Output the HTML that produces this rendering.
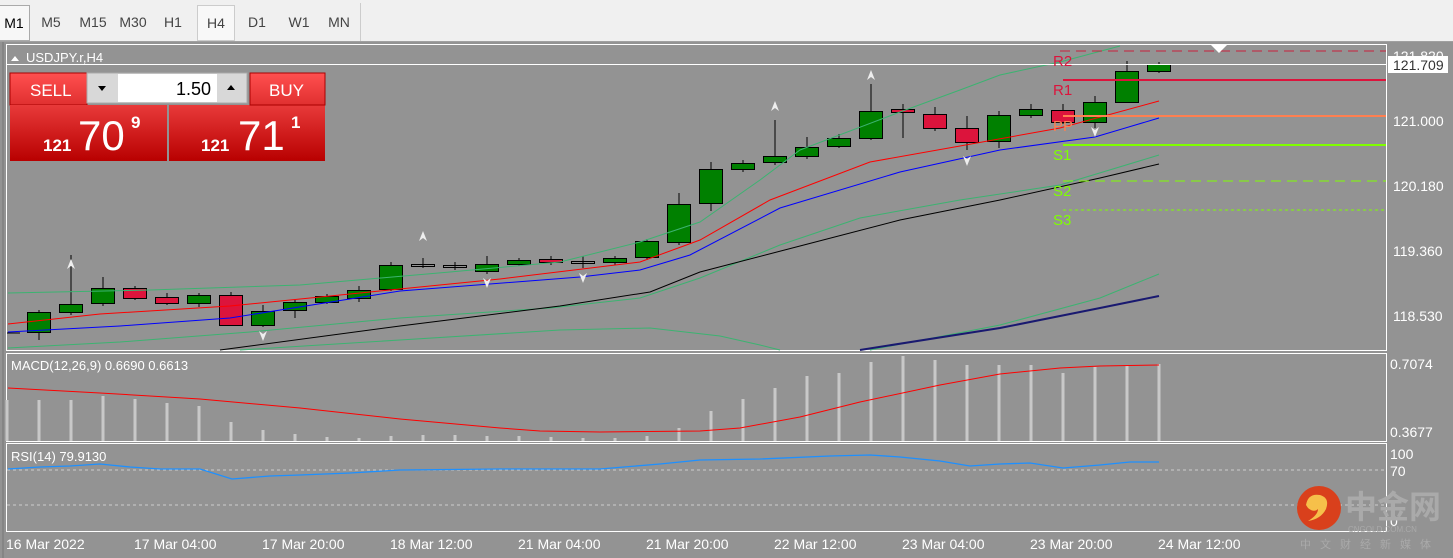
<!DOCTYPE html>
<html><head><meta charset="utf-8"><style>
html,body{margin:0;padding:0;width:1453px;height:558px;overflow:hidden;background:#939393;font-family:"Liberation Sans",sans-serif}
#tb{position:absolute;left:0;top:0;width:1453px;height:41px;background:#f0f0f0;border-bottom:1px solid #a0a0a0}
.b{position:absolute;top:5px;height:34px;line-height:34px;font-size:14px;color:#444;text-align:center}
svg{position:absolute;left:0;top:0}
</style></head><body>
<div id="tb">
<div class="b" style="left:-2px;width:30px;border:1px solid #aaa;background:#f7f7f7;color:#000">M1</div>
<div class="b" style="left:36px;width:30px">M5</div>
<div class="b" style="left:76px;width:34px">M15</div>
<div class="b" style="left:116px;width:34px">M30</div>
<div class="b" style="left:160px;width:26px">H1</div>
<div class="b" style="left:197px;width:36px;border:1px solid #ccc;background:#f8f8f8">H4</div>
<div class="b" style="left:242px;width:30px">D1</div>
<div class="b" style="left:284px;width:30px">W1</div>
<div class="b" style="left:324px;width:30px">MN</div>
<div style="position:absolute;left:360px;top:3px;width:1px;height:38px;background:#ccc"></div>
</div>
<svg id="s" width="1453" height="558" xmlns="http://www.w3.org/2000/svg" font-family="Liberation Sans, sans-serif">
<rect x="0" y="42" width="1453" height="516" fill="#939393"/>
<line x1="3" y1="42" x2="3" y2="558" stroke="#777"/>
<rect x="6.5" y="44.5" width="1380" height="306" fill="none" stroke="#fff"/>
<rect x="6.5" y="353.5" width="1380" height="88" fill="none" stroke="#fff"/>
<rect x="6.5" y="443.5" width="1380" height="88" fill="none" stroke="#fff"/>
<g id="dyn"></g>
<line x1="1060" y1="51" x2="1386" y2="51" stroke="#c8203c" stroke-dasharray="10,6"/>
<line x1="7" y1="64.5" x2="1386" y2="64.5" stroke="#fff"/>
<line x1="1063" y1="80" x2="1386" y2="80" stroke="#dc143c" stroke-width="2"/>
<line x1="1063" y1="116" x2="1386" y2="116" stroke="#ff7f50" stroke-width="2"/>
<line x1="1063" y1="145" x2="1386" y2="145" stroke="#7fff00" stroke-width="2"/>
<line x1="1063" y1="181" x2="1386" y2="181" stroke="#7fff00" stroke-dasharray="10,6"/>
<line x1="1063" y1="210" x2="1386" y2="210" stroke="#7fff00" stroke-dasharray="3,3"/>
<g font-size="15">
<text x="1053" y="66" fill="#dc143c">R2</text><text x="1053" y="95" fill="#dc143c">R1</text>
<text x="1053" y="131" fill="#ff7f50">PP</text><text x="1053" y="160" fill="#7fff00">S1</text>
<text x="1053" y="196" fill="#7fff00">S2</text><text x="1053" y="225" fill="#7fff00">S3</text>
</g>
<polygon points="1211,45 1227,45 1219,53" fill="#fff"/>
<g font-size="14" fill="#fff">
<text x="1393" y="61">121.820</text>
<rect x="1388" y="56" width="60" height="17" fill="#fff"/><text x="1393" y="70" fill="#333">121.709</text>
<text x="1393" y="126">121.000</text><text x="1393" y="191">120.180</text>
<text x="1393" y="256">119.360</text><text x="1393" y="321">118.530</text>
<text x="1390" y="369">0.7074</text><text x="1390" y="437">0.3677</text>
<text x="1390" y="459">100</text><text x="1390" y="476">70</text>
<text x="1390" y="526">0</text>
<text x="6" y="549">16 Mar 2022</text><text x="134" y="549">17 Mar 04:00</text>
<text x="262" y="549">17 Mar 20:00</text><text x="390" y="549">18 Mar 12:00</text>
<text x="518" y="549">21 Mar 04:00</text><text x="646" y="549">21 Mar 20:00</text>
<text x="774" y="549">22 Mar 12:00</text><text x="902" y="549">23 Mar 04:00</text>
<text x="1030" y="549">23 Mar 20:00</text><text x="1158" y="549">24 Mar 12:00</text>
</g>
<g font-size="13" fill="#fff">
<polygon points="11,61 19,61 15,56" fill="#fff"/>
<text x="26" y="62">USDJPY.r,H4</text>
<text x="11" y="370">MACD(12,26,9) 0.6690 0.6613</text>
<text x="11" y="461">RSI(14) 79.9130</text>
</g>
<line x1="7" y1="470" x2="1386" y2="470" stroke="#ccc" stroke-dasharray="3,3"/>
<line x1="7" y1="505" x2="1386" y2="505" stroke="#ccc" stroke-dasharray="3,3"/>
<polyline fill="none" stroke="#1e90ff" stroke-width="1.3" points="8,469 40,467 70,466 100,464 130,467 160,469 200,469 232,479 270,476 300,475 350,473 400,470 500,469 600,469 660,464 700,460 760,459 830,456 870,455 900,457 940,461 970,466 1000,464 1030,463 1063,468 1100,465 1130,462 1159,462"/>
<defs><linearGradient id="rg" x1="0" y1="0" x2="0" y2="1"><stop offset="0" stop-color="#e83a3a"/><stop offset="1" stop-color="#b80000"/></linearGradient>
<linearGradient id="rg2" x1="0" y1="0" x2="0" y2="1"><stop offset="0" stop-color="#ff5050"/><stop offset="1" stop-color="#e03030"/></linearGradient></defs>
<rect x="10" y="73" width="77" height="32" fill="url(#rg2)" stroke="#a00"/>
<rect x="10" y="105" width="157" height="56" fill="url(#rg)"/>
<rect x="169" y="105" width="156" height="56" fill="url(#rg)"/>
<rect x="250" y="73" width="75" height="32" fill="url(#rg2)" stroke="#a00"/>
<rect x="87" y="73" width="160" height="30" fill="#d8d8d8" stroke="#aaa"/>
<rect x="118" y="74" width="99" height="28" fill="#fff"/>
<polygon points="98,86 106,86 102,91" fill="#000"/><polygon points="227,90 235,90 231,85" fill="#000"/>
<text x="211" y="95" font-size="18" fill="#000" text-anchor="end">1.50</text>
<g fill="#fff">
<text x="30" y="96" font-size="17">SELL</text><text x="269" y="96" font-size="17">BUY</text>
<text x="43" y="151" font-size="17" font-weight="bold">121</text>
<text x="78" y="150" font-size="42">70</text><text x="131" y="128" font-size="17" font-weight="bold">9</text>
<text x="201" y="151" font-size="17" font-weight="bold">121</text>
<text x="238" y="150" font-size="42">71</text><text x="291" y="128" font-size="17" font-weight="bold">1</text>
</g>
<circle cx="1319" cy="508" r="22" fill="#d9401c"/>
<path d="M1306,505 q2,-12 14,-10 q10,3 6,14 q-5,10 -18,12 q10,-6 10,-12 q-4,4 -10,-1 z" fill="#f6c04a"/>
<text x="1345" y="518" font-size="32" fill="#aaa" font-family="Noto Sans CJK SC, sans-serif" font-weight="bold">中金网</text>
<text x="1348" y="532" font-size="8" fill="#aaa">CNGOLD.COM.CN</text>
<text x="1300" y="548" font-size="11" fill="#aaa" letter-spacing="9" font-family="Noto Sans CJK SC, sans-serif">中文财经新媒体</text>
</svg>
<script>
var g=document.getElementById('dyn'),h='';
var c=[[39,312,332,310,340,1],[71,304,312,255,315,1],[103,288,303,277,306,1],[135,288,298,286,300,0],[167,297,303,293,305,0],[199,295,303,293,307,1],[231,295,325,292,326,0],[263,311,325,305,327,1],[295,302,310,300,318,1],[327,296,302,294,304,1],[359,290,298,286,302,1],[391,265,289,262,291,1],[423,264,266,258,268,2],[455,265,267,262,270,2],[487,264,271,256,274,1],[519,260,264,258,266,1],[551,259,262,256,265,0],[583,261,263,256,268,2],[615,258,262,256,265,1],[647,241,257,239,260,1],[679,204,242,193,245,1],[711,169,203,162,211,1],[743,163,169,160,172,1],[775,156,162,120,165,1],[807,147,156,137,159,1],[839,138,146,134,148,1],[871,111,138,84,140,1],[903,109,112,104,138,0],[935,114,128,107,131,0],[967,128,142,116,150,0],[999,115,141,111,148,1],[1031,109,115,104,118,1],[1063,110,122,104,124,0],[1095,102,122,96,128,1],[1127,71,102,61,103,1],[1159,64,71,62,73,1]];
h+='<line x1="7" y1="333" x2="20" y2="333" stroke="#000"/>';
c.forEach(function(k){h+='<line x1="'+k[0]+'" y1="'+k[3]+'" x2="'+k[0]+'" y2="'+k[4]+'" stroke="#000"/>';
var f=k[5]==1?'#008000':(k[5]==0?'#dc143c':'none');var hh=Math.max(k[2]-k[1],1);
h+='<rect x="'+(k[0]-11.5)+'" y="'+(k[1]+0.5)+'" width="23" height="'+hh+'" fill="'+f+'" stroke="#000"/>';});
function pl(p,col,w){h+='<polyline fill="none" stroke="'+col+'" stroke-width="'+(w||1)+'" points="'+p+'"/>';}
pl('8,293 150,290 300,285 450,272 560,262 640,242 700,222 760,180 800,150 900,112 960,90 1000,75 1060,62 1120,46','#3cb371');
pl('8,348 120,342 250,332 400,318 550,308 640,298 700,278 780,245 860,218 960,200 1060,185 1159,155','#3cb371');
pl('240,350 400,340 560,330 650,328 720,336 760,345 780,350','#3cb371');
pl('870,350 1000,325 1100,298 1159,274','#3cb371');
pl('860,350 1000,328 1100,308 1159,296','#191970',2);
pl('8,324 100,314 230,306 360,293 500,279 640,262 700,240 770,200 870,162 960,146 1060,128 1159,101','#ff0000');
pl('8,332 120,326 230,318 400,291 580,277 640,270 690,255 780,208 900,172 1000,150 1095,137 1159,118','#0000ff');
pl('220,350 400,326 560,306 650,292 700,272 800,246 900,220 1000,200 1100,178 1159,164','#000');
[[71,264],[423,236],[775,106],[871,75]].forEach(function(a){h+='<polygon points="'+(a[0]-4)+','+(a[1]+5)+' '+a[0]+','+(a[1]-5)+' '+(a[0]+4)+','+(a[1]+5)+' '+a[0]+','+(a[1]+2)+'" fill="#eee"/>';});
[[263,336],[487,283],[583,278],[967,161],[1095,132]].forEach(function(a){h+='<polygon points="'+(a[0]-4)+','+(a[1]-5)+' '+a[0]+','+(a[1]+5)+' '+(a[0]+4)+','+(a[1]-5)+' '+a[0]+','+(a[1]-2)+'" fill="#eee"/>';});
var m=[400,400,400,396,399,403,406,422,430,434,437,438,436,435,435,436,436,437,438,438,436,428,411,399,388,376,373,362,356,360,365,365,365,373,367,366,364];
m.forEach(function(v,i){var x=7+i*32;h+='<rect x="'+(x-1.5)+'" y="'+v+'" width="3" height="'+(441-v)+'" fill="#c8c8c8"/>';});
pl('8,388 100,393 200,399 300,408 400,419 500,428 540,431 600,432 700,431 740,428 800,417 860,402 940,385 1000,374 1060,368 1100,366 1159,365','#ff0000');
g.innerHTML=h;
</script>
</body></html>
